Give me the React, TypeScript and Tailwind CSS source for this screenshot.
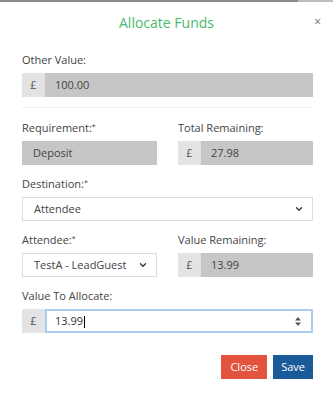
import React from 'react';
import { ChevronDown } from 'lucide-react';

const Label: React.FC<{ text: string; required?: boolean }> = ({ text, required }) => (
  <div className="text-[11px] text-[#444] mb-[6px] leading-[14px]">
    {text}
    {required && <sup className="text-[7px] relative -top-[3px]">*</sup>}
  </div>
);

const Addon: React.FC<{ value: string; focus?: boolean }> = ({ value, focus }) => (
  <div className="flex h-[24px] text-[11px]">
    <div className="w-[23px] shrink-0 bg-[#e3e3e3] text-[#555] flex items-center justify-center">£</div>
    {focus ? (
      <div className="flex-1 bg-white border-2 border-[#a9cdf0] flex items-center justify-between pl-[8px] pr-[10px] text-[#333]">
        <span>
          {value}
          <span className="inline-block w-[1px] h-[12px] bg-black align-middle ml-[1px]" />
        </span>
        <svg width="6" height="9" viewBox="0 0 6 9">
          <path d="M3 0 L6 3.5 H0 Z M3 9 L0 5.5 H6 Z" fill="#555" />
        </svg>
      </div>
    ) : (
      <div className="flex-1 bg-[#c6c6c6] flex items-center pl-[10px] text-[#444]">{value}</div>
    )}
  </div>
);

const Select: React.FC<{ value: string }> = ({ value }) => (
  <div className="h-[24px] bg-white border border-[#ddd] flex items-center justify-between pl-[11px] pr-[8px] text-[11px] text-[#444]">
    <span>{value}</span>
    <ChevronDown className="w-[10px] h-[10px] text-[#333]" strokeWidth={3} />
  </div>
);

export default function App() {
  return (
    <div className="w-[333px] h-[402px] bg-white relative" style={{ fontFamily: '"Open Sans", sans-serif' }}>
      <div className="h-[2px] flex">
        <div className="w-[298px] bg-[#8a8a8a]" />
        <div className="flex-1 bg-[#bdbdbd]" />
      </div>

      <div className="relative h-[38px] flex items-center justify-center pt-[2px]">
        <h1 className="text-[14px] text-[#4bb96b] font-normal">Allocate Funds</h1>
        <span className="absolute right-[12px] top-[11px] text-[12px] text-[#666]">×</span>
      </div>

      <div className="pl-[22px] pr-[20px] pt-[13px]">
        <Label text="Other Value:" />
        <div className="mt-[1px]">
          <Addon value="100.00" />
        </div>

        <div className="h-[1px] bg-[#eee] mt-[10px] mb-[13px]" />

        <div className="grid grid-cols-2 gap-x-[21px]">
          <div>
            <Label text="Requirement:" required />
            <div className="h-[24px] bg-[#c6c6c6] flex items-center pl-[11px] text-[11px] text-[#444]">Deposit</div>
          </div>
          <div>
            <Label text="Total Remaining:" />
            <Addon value="27.98" />
          </div>
        </div>

        <div className="mt-[12px]">
          <Label text="Destination:" required />
          <Select value="Attendee" />
        </div>

        <div className="grid grid-cols-2 gap-x-[21px] mt-[12px]">
          <div>
            <Label text="Attendee:" required />
            <Select value="TestA - LeadGuest" />
          </div>
          <div>
            <Label text="Value Remaining:" />
            <Addon value="13.99" />
          </div>
        </div>

        <div className="mt-[12px]">
          <Label text="Value To Allocate:" />
          <Addon value="13.99" focus />
        </div>

        <div className="flex justify-end gap-[6px] mt-[22px]">
          <button className="h-[24px] px-[9px] bg-[#e3533d] text-white text-[11px]">Close</button>
          <button className="h-[24px] px-[8px] bg-[#1a5a98] text-white text-[11px]">Save</button>
        </div>
      </div>
    </div>
  );
}
